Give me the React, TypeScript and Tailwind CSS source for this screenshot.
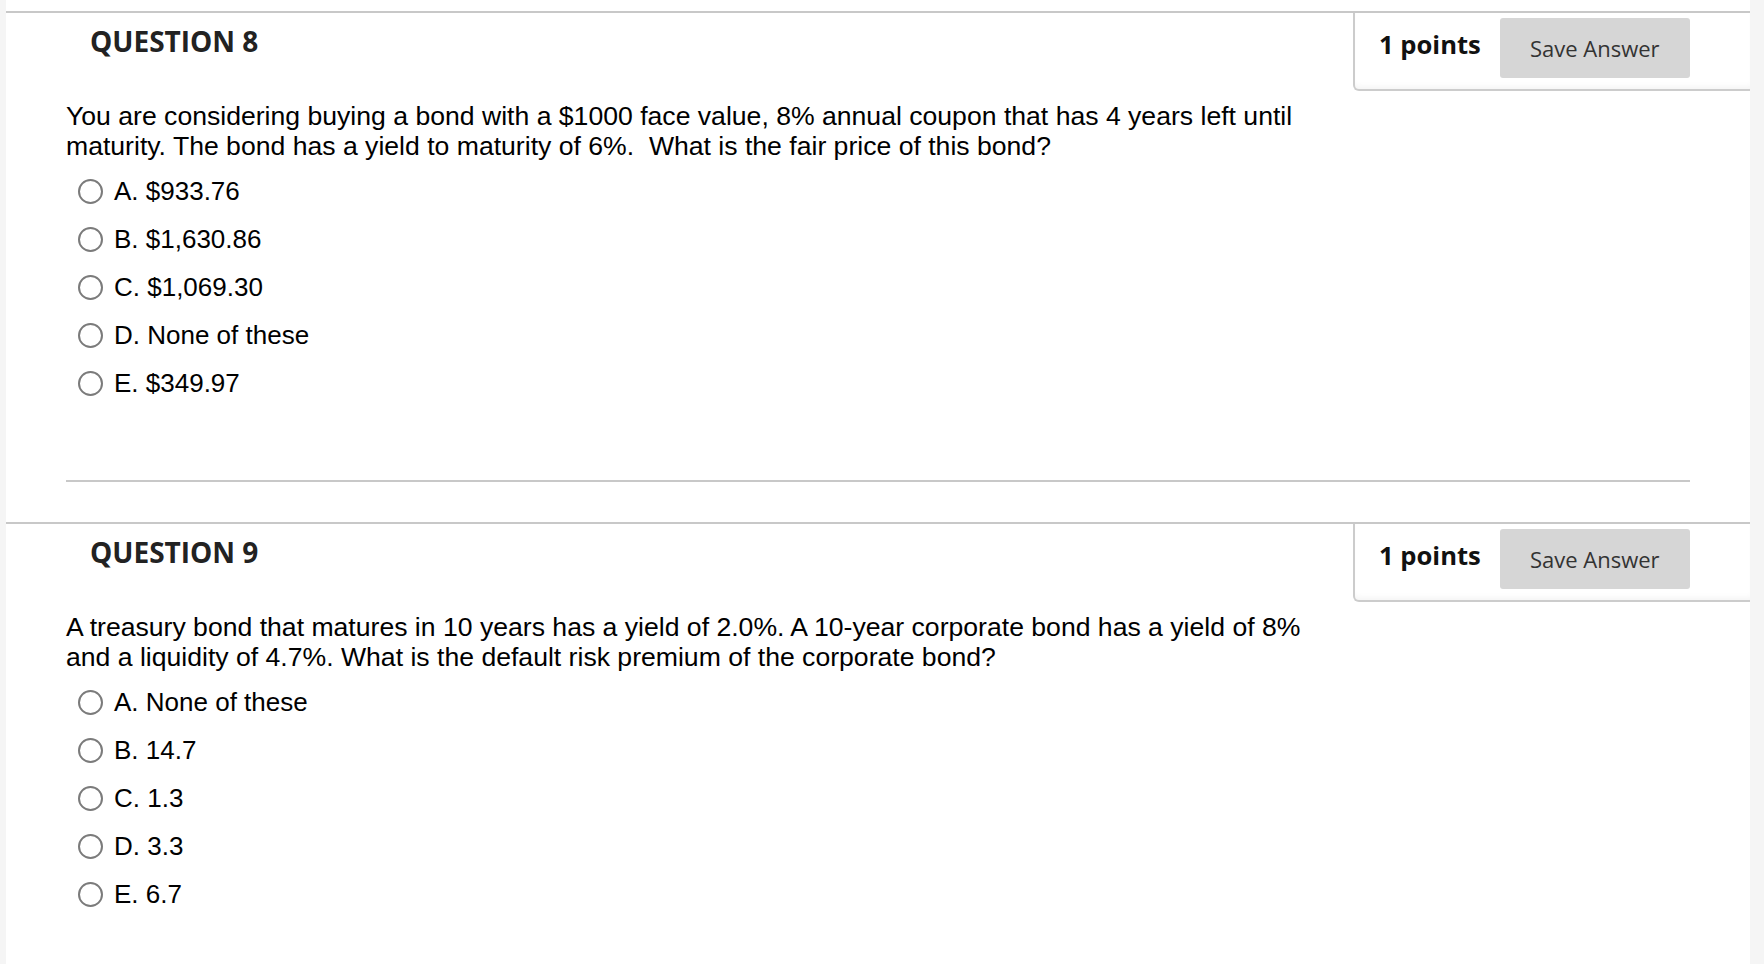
const questions = [
  {
    number: 8,
    text: "You are considering buying a bond with a $1000 face value, 8% annual coupon that has 4 years left until maturity. The bond has a yield to maturity of 6%.\u00a0 What is the fair price of this bond?",
    options: ["A. $933.76", "B. $1,630.86", "C. $1,069.30", "D. None of these", "E. $349.97"],
  },
  {
    number: 9,
    text: "A treasury bond that matures in 10 years has a yield of 2.0%. A 10-year corporate bond has a yield of 8% and a liquidity of 4.7%. What is the default risk premium of the corporate bond?",
    options: ["A. None of these", "B. 14.7", "C. 1.3", "D. 3.3", "E. 6.7"],
  },
];

function Question({ q, last }: { q: (typeof questions)[number]; last: boolean }) {
  return (
    <section className="border-t-2 border-[#c8c8c8]">
      <div className="flex items-start justify-between">
        <h2 className="pl-[84px] pt-[14px] font-['Open_Sans',sans-serif] text-[28px] font-bold leading-none text-[#222]">
          QUESTION {q.number}
        </h2>
        <div className="flex h-[78px] w-[397px] items-start gap-[19px] rounded-bl-[6px] border-b-2 border-l-2 border-[#cccccc] pl-[24px] pt-[5px] shadow-[inset_0_-6px_6px_-4px_rgba(0,0,0,0.05)]">
          <span className="mt-[14px] font-['Open_Sans',sans-serif] text-[25.6px] font-bold leading-none text-[#111]">
            1 points
          </span>
          <button className="h-[60px] w-[190px] rounded-[3px] bg-[#d6d6d6] font-['Open_Sans',sans-serif] text-[22px] text-[#333]">
            Save Answer
          </button>
        </div>
      </div>

      <div className="pl-[60px] pr-[60px] font-['Liberation_Sans',Arial,sans-serif] text-black">
        <p className="mt-[10px] max-w-[1265px] text-[26.6px] leading-[30px]">{q.text}</p>
        <ul className="mt-[6px]">
          {q.options.map((o) => (
            <li key={o} className="flex h-[48px] items-center">
              <span className="ml-[12px] h-[25px] w-[25px] shrink-0 rounded-full border-2 border-[#7b7b7b] bg-white" />
              <span className="ml-[11px] text-[26px] leading-none">{o}</span>
            </li>
          ))}
        </ul>
        {!last && <div className="mt-[73px] h-[2px] bg-[#c8c8c8]" />}
      </div>
      {!last && <div className="h-[40px]" />}
    </section>
  );
}

export default function App() {
  return (
    <div className="flex min-h-[964px] w-full bg-white">
      <div className="w-[6px] shrink-0 bg-[#f5f5f5]" />
      <main className="flex-1 pt-[11px]">
        {questions.map((q, i) => (
          <Question key={q.number} q={q} last={i === questions.length - 1} />
        ))}
      </main>
      <div className="w-[14px] shrink-0 bg-[#f5f5f5]" />
    </div>
  );
}
